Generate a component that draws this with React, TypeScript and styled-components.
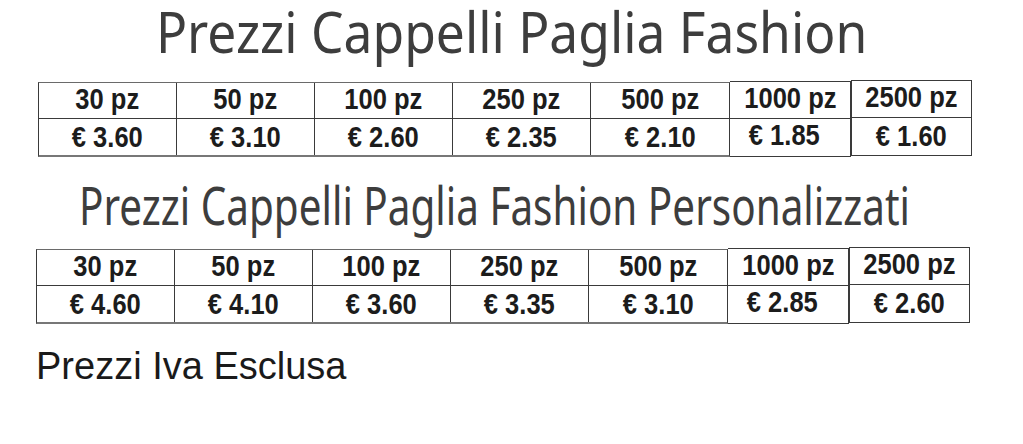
import React from "react";
import styled, { createGlobalStyle } from "styled-components";

interface ITier {
  qty: string;
  price: string;
}

interface ITableProps {
  tiers: ITier[];
  shift: number;
}

const base: ITier[] = [
  { qty: "30 pz", price: "€ 3.60" },
  { qty: "50 pz", price: "€ 3.10" },
  { qty: "100 pz", price: "€ 2.60" },
  { qty: "250 pz", price: "€ 2.35" },
  { qty: "500 pz", price: "€ 2.10" },
  { qty: "1000 pz", price: "€ 1.85" },
  { qty: "2500 pz", price: "€ 1.60" },
];

const custom: ITier[] = [
  { qty: "30 pz", price: "€ 4.60" },
  { qty: "50 pz", price: "€ 4.10" },
  { qty: "100 pz", price: "€ 3.60" },
  { qty: "250 pz", price: "€ 3.35" },
  { qty: "500 pz", price: "€ 3.10" },
  { qty: "1000 pz", price: "€ 2.85" },
  { qty: "2500 pz", price: "€ 2.60" },
];

// the last two columns sit in their own boxes, a little off the main grid
function PriceTable({ tiers, shift }: ITableProps) {
  const main = tiers.slice(0, 5);
  const side = tiers.slice(5);
  return (
    <Table $shift={shift}>
      <MainBlock>
        {main.map((t) => (
          <Qty key={t.qty}>
            <Narrow>{t.qty}</Narrow>
          </Qty>
        ))}
        {main.map((t) => (
          <Price key={t.qty}>
            <Narrow>{t.price}</Narrow>
          </Price>
        ))}
      </MainBlock>
      {side.map((t, i) => (
        <SideBox key={t.qty} $first={i === 0}>
          <Qty>
            <Narrow>{t.qty}</Narrow>
          </Qty>
          <Price $offset={i === 0}>
            <Narrow>{t.price}</Narrow>
          </Price>
        </SideBox>
      ))}
    </Table>
  );
}

function App() {
  return (
    <>
      <GlobalStyle />
      <Page>
        <Title1>
          <Squeeze $scale={0.92} $origin="center">
            Prezzi Cappelli Paglia Fashion
          </Squeeze>
        </Title1>
        <PriceTable tiers={base} shift={38} />
        <Title2>
          <Squeeze $scale={0.763} $origin="left">
            Prezzi Cappelli Paglia Fashion Personalizzati
          </Squeeze>
        </Title2>
        <PriceTable tiers={custom} shift={36} />
        <Note>Prezzi Iva Esclusa</Note>
      </Page>
    </>
  );
}

const GlobalStyle = createGlobalStyle`
  html, body {
    margin: 0;
    padding: 0;
    background: #ffffff;
  }
`;

const Page = styled.div`
  width: 1023px;
  height: 444px;
  overflow: hidden;
  display: flex;
  flex-direction: column;
`;

const TitleBase = styled.div`
  font-family: "Noto Sans", sans-serif;
  font-weight: 400;
  color: #3d3d3d;
  white-space: nowrap;
  line-height: 1;
`;

const Squeeze = styled.span<{ $scale: number; $origin: string }>`
  display: inline-block;
  transform: scaleX(${(p) => p.$scale});
  transform-origin: ${(p) => p.$origin};
`;

const Title1 = styled(TitleBase)`
  font-size: 56px;
  text-align: center;
  padding-top: 3px;
  height: 77px;
`;

const Title2 = styled(TitleBase)`
  font-size: 53px;
  padding-left: 79px;
  margin-top: 21px;
  height: 69px;
`;

const Table = styled.div<{ $shift: number }>`
  display: flex;
  align-items: flex-start;
  margin-left: ${(p) => p.$shift}px;
  font-family: "Liberation Sans", Arial, sans-serif;
  font-weight: 700;
  font-size: 29px;
  color: #1c1c1c;
`;

const Narrow = styled.span`
  display: inline-block;
  transform: scaleX(0.88);
  white-space: nowrap;
`;

const MainBlock = styled.div`
  display: grid;
  grid-template-columns: repeat(5, 138px);
  grid-template-rows: 36px 36px;
  border: 1px solid #3a3a3a;
  border-top-color: #6a6a6a;
  border-bottom: 2px solid #777;
  margin-top: 2px;
  & > div {
    border-right: 1px solid #3a3a3a;
  }
  & > div:nth-child(5n) {
    border-right: none;
  }
  & > div:nth-child(-n + 5) {
    border-bottom: 1px solid #3a3a3a;
  }
`;

const SideBox = styled.div<{ $first?: boolean }>`
  box-sizing: border-box;
  display: grid;
  grid-template-rows: 37px 37px;
  width: 121px;
  border: 1px solid #3a3a3a;
  border-left: ${(p) => (p.$first ? "none" : "1px solid #3a3a3a")};
  margin-top: ${(p) => (p.$first ? "1px" : "0")};
  & > div:first-child {
    border-bottom: 1px solid #3a3a3a;
  }
`;

const Qty = styled.div`
  display: flex;
  align-items: center;
  justify-content: center;
  line-height: 1;
  padding-bottom: 3px;
`;

const Price = styled.div<{ $offset?: boolean }>`
  display: flex;
  align-items: center;
  justify-content: center;
  line-height: 1;
  padding-bottom: ${(p) => (p.$offset ? "4px" : "0")};
  padding-right: ${(p) => (p.$offset ? "12px" : "0")};
`;

const Note = styled.div`
  font-family: "Liberation Sans", Arial, sans-serif;
  font-size: 38px;
  color: #1a1a1a;
  margin-top: 23px;
  margin-left: 36px;
  line-height: 1;
`;

export default App;
